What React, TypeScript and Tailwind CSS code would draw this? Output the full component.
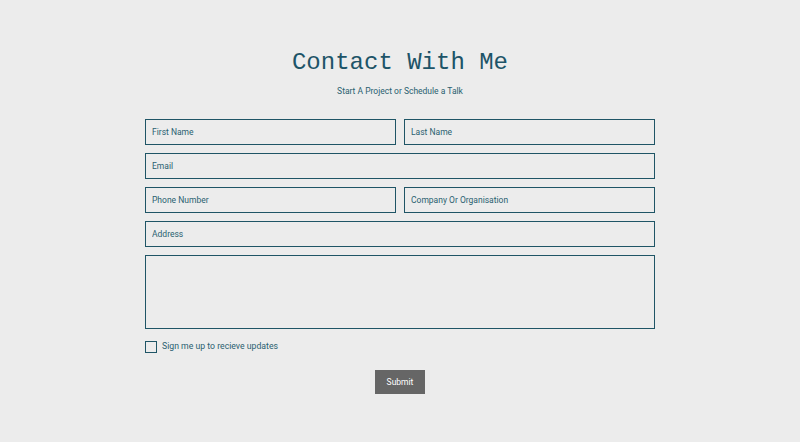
import React from "react";

const inputCls =
  "h-[26px] w-full border border-[#1f5566] bg-transparent px-[6px] text-[8.5px] text-[#1d5468] placeholder:text-[#2a5f70] outline-none";

export default function App() {
  return (
    <div
      className="min-h-[442px] w-full bg-[#ececec] flex flex-col items-center pt-[48px]"
      style={{ fontFamily: "Roboto, 'Liberation Sans', sans-serif" }}
    >
      <h1
        className="text-[24px] leading-[30px] text-[#1d5468]"
        style={{ fontFamily: "'Liberation Mono', 'DejaVu Sans Mono', monospace" }}
      >
        Contact With Me
      </h1>
      <p className="mt-[8px] text-[8.5px] leading-[10px] text-[#2a5f70]">
        Start A Project or Schedule a Talk
      </p>
      <form className="mt-[23px] w-[510px] flex flex-col gap-[8px]">
        <div className="flex gap-[8px]">
          <input className={inputCls} placeholder="First Name" />
          <input className={inputCls} placeholder="Last Name" />
        </div>
        <input className={inputCls} placeholder="Email" />
        <div className="flex gap-[8px]">
          <input className={inputCls} placeholder="Phone Number" />
          <input className={inputCls} placeholder="Company Or Organisation" />
        </div>
        <input className={inputCls} placeholder="Address" />
        <textarea className="h-[74px] w-full resize-none border border-[#1f5566] bg-transparent px-[6px] py-[4px] text-[8.5px] text-[#1d5468] outline-none" />
        <label className="mt-[3px] flex items-center gap-[5px] text-[8.7px] text-[#2a5f70]">
          <span className="h-[12px] w-[12px] border border-[#1f5566] bg-transparent" />
          <span>Sign me up to recieve updates</span>
        </label>
        <div className="mt-[9px] flex justify-center">
          <button
            type="button"
            className="h-[24px] w-[50px] bg-[#666666] text-[8.5px] text-white"
          >
            Submit
          </button>
        </div>
      </form>
    </div>
  );
}
